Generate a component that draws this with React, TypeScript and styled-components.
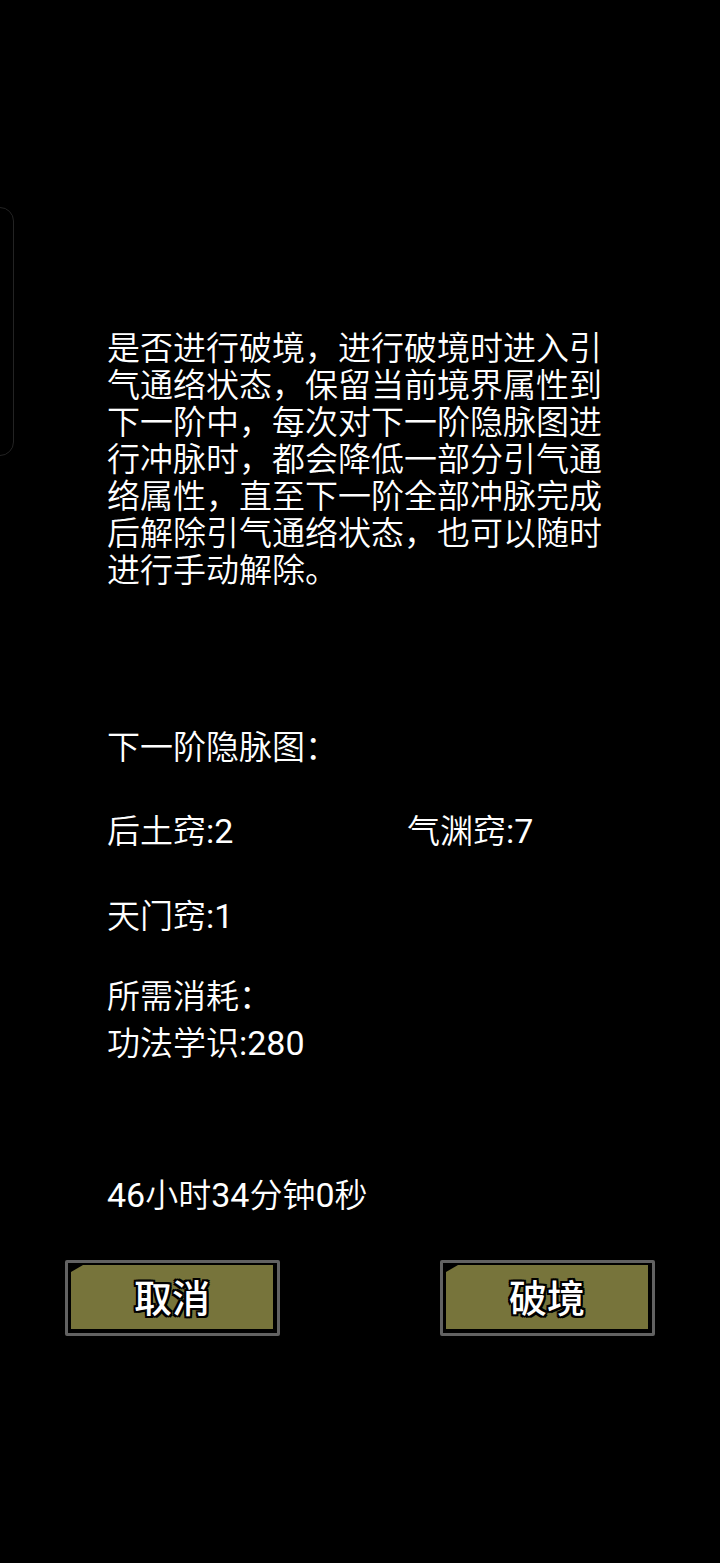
import styled, { createGlobalStyle } from "styled-components";

// Page-wide reset: black screen, CJK sans with Roboto digits
const GlobalStyle = createGlobalStyle`
  html, body {
    margin: 0;
    padding: 0;
    background: #000;
  }
  body {
    font-family: Roboto, "Noto Sans CJK SC", "Noto Sans", sans-serif;
    color: #fff;
  }
`;

// Top level screen
const Screen = styled.div`
  position: relative;
  width: 720px;
  min-height: 1563px;
  background: #000;
  overflow: hidden;
  display: flex;
  flex-direction: column;
`;

// Faint side drawer handle on the left edge (overlays the page)
const SideHandle = styled.div`
  position: absolute;
  left: -20px;
  top: 207px;
  width: 34px;
  height: 249px;
  border: 1.5px solid #232323;
  border-radius: 14px;
  box-sizing: border-box;
`;

// Column holding all the text blocks
const Content = styled.div`
  display: flex;
  flex-direction: column;
  padding: 330px 0 0 107px;
  font-weight: 350;
`;

const Paragraph = styled.p`
  margin: 0;
  width: 500px;
  font-size: 33px;
  line-height: 37px;
  color: #fff;
`;

const Line = styled.div<{ gap: number }>`
  margin-top: ${(p) => p.gap}px;
  font-size: 33px;
  line-height: 37px;
  white-space: nowrap;
`;

const Row = styled.div<{ gap: number }>`
  display: grid;
  grid-template-columns: 300px auto;
  margin-top: ${(p) => p.gap}px;
  font-size: 33px;
  line-height: 37px;
  white-space: nowrap;
`;

// Latin digits and colons are a touch heavier than the CJK text
const Num = styled.span`
  font-family: Roboto, sans-serif;
  font-weight: 400;
  font-size: 34px;
`;

// Bottom buttons
const ButtonBar = styled.div`
  display: flex;
  justify-content: space-between;
  padding: 0 65px;
  margin-top: 46px;
`;

const ButtonFrame = styled.div`
  width: 215px;
  height: 76px;
  box-sizing: border-box;
  border: 3px solid #626262;
  border-radius: 2px;
  background: #000;
  padding: 2px 4px 4px 3px;
  display: flex;
`;

const ButtonFace = styled.button`
  flex: 1;
  border: none;
  margin: 0;
  padding: 0 0 4px;
  background: #77743b;
  clip-path: polygon(0 7px, 12px 0, 100% 0, 100% 100%, 0 100%);
  display: flex;
  align-items: center;
  justify-content: center;
  font-family: "Noto Sans CJK SC", "Noto Sans", sans-serif;
  font-size: 38px;
  font-weight: 500;
  color: #fff;
  text-shadow:
    2px 0 0 #000, -2px 0 0 #000, 0 2px 0 #000, 0 -2px 0 #000,
    2px 2px 0 #000, -2px -2px 0 #000, 2px -2px 0 #000, -2px 2px 0 #000;
  cursor: pointer;
`;

const App = () => {
  return (
    <Screen>
      <GlobalStyle />
      <SideHandle />
      <Content>
        <Paragraph>
          是否进行破境，进行破境时进入引气通络状态，保留当前境界属性到下一阶中，每次对下一阶隐脉图进行冲脉时，都会降低一部分引气通络属性，直至下一阶全部冲脉完成后解除引气通络状态，也可以随时进行手动解除。
        </Paragraph>
        <Line gap={140}>下一阶隐脉图：</Line>
        <Row gap={47}>
          <span>
            后土窍<Num>:2</Num>
          </span>
          <span>
            气渊窍<Num>:7</Num>
          </span>
        </Row>
        <Row gap={48}>
          <span>
            天门窍<Num>:1</Num>
          </span>
        </Row>
        <Line gap={43}>所需消耗：</Line>
        <Line gap={10}>
          功法学识<Num>:280</Num>
        </Line>
        <Line gap={115}>
          <Num>46</Num>小时<Num>34</Num>分钟<Num>0</Num>秒
        </Line>
      </Content>
      <ButtonBar>
        <ButtonFrame>
          <ButtonFace>取消</ButtonFace>
        </ButtonFrame>
        <ButtonFrame>
          <ButtonFace>破境</ButtonFace>
        </ButtonFrame>
      </ButtonBar>
    </Screen>
  );
};

export default App;
